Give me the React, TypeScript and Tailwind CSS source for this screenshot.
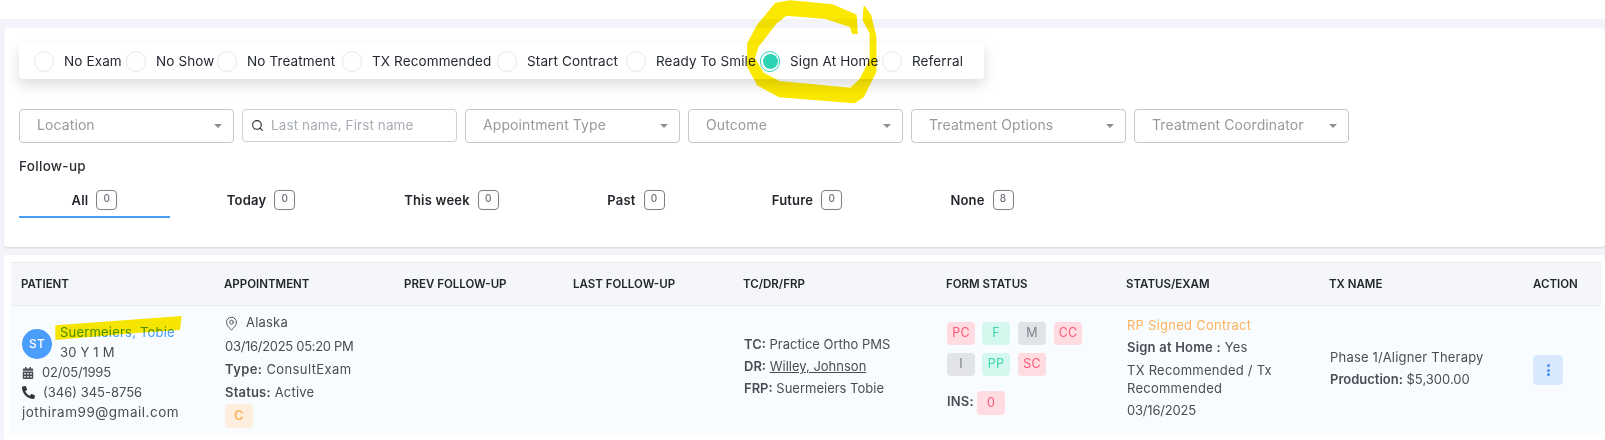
import React from 'react';
import { MapPin, Search } from 'lucide-react';
import { FaCalendarAlt, FaPhone } from 'react-icons/fa';

const outcomes = [
  { label: 'No Exam', width: 'w-[92px]' },
  { label: 'No Show', width: 'w-[91px]' },
  { label: 'No Treatment', width: 'w-[125px]' },
  { label: 'TX Recommended', width: 'w-[155px]' },
  { label: 'Start Contract', width: 'w-[129px]' },
  { label: 'Ready To Smile', width: 'w-[134px]' },
  { label: 'Sign At Home', width: 'w-[122px]', checked: true },
  { label: 'Referral', width: 'w-[102px]' },
];

const tabs = [
  { label: 'All', count: 0, width: 'w-[151px]', active: true },
  { label: 'Today', count: 0, width: 'w-[182px]' },
  { label: 'This week', count: 0, width: 'w-[199px]' },
  { label: 'Past', count: 0, width: 'w-[170px]' },
  { label: 'Future', count: 0, width: 'w-[172px]' },
  { label: 'None', count: 8, width: 'w-[178px]' },
];

const columns = ['PATIENT', 'APPOINTMENT', 'PREV FOLLOW-UP', 'LAST FOLLOW-UP', 'TC/DR/FRP', 'FORM STATUS', 'STATUS/EXAM', 'TX NAME', 'ACTION'];

const tones = {
  red: 'bg-[#ffdbe2] text-[#fc5a72]',
  green: 'bg-[#d4f7ee] text-[#3fd6b0]',
  gray: 'bg-[#e2e3e6] text-[#7d828c]',
};

function Chip({ text, tone }: { text: string; tone: keyof typeof tones }) {
  return (
    <span className={`flex h-[23px] w-[28px] items-center justify-center rounded-[4px] text-[12.5px] ${tones[tone]}`}>
      {text}
    </span>
  );
}

function Select({ label }: { label: string }) {
  return (
    <div className="flex h-[34px] w-[215px] items-center justify-between rounded-[4px] border border-[#c6c6c6] pl-[17px] pr-[11px]">
      <span className="-mt-[3px] text-[14px] tracking-[0.1px] text-[#9a9a9a]">{label}</span>
      <span className="h-0 w-0 border-x-[4px] border-t-[4px] border-x-transparent border-t-[#8f8f8f]" />
    </div>
  );
}

export default function App() {
  return (
    <div className="relative h-[440px] w-[1605px] overflow-hidden bg-white pt-[19px] font-['Inter',sans-serif] text-[13px] tracking-[0.2px] text-[#4a4d55]">
      <div className="h-[421px] bg-[#f3f4f9] pl-[4px] pt-[9px]">
        <div className="h-[219px] rounded-[4px] bg-white pl-[15px] pt-[15px] shadow-[0_1px_2px_rgba(0,0,0,0.12)]">
          <div className="flex h-[36px] w-[965px] items-center rounded-[4px] bg-white pl-[15px] shadow-[0_6px_14px_rgba(0,0,0,0.14)]">
            {outcomes.map((o) => (
              <label key={o.label} className={`flex items-center gap-[10px] ${o.width}`}>
                {o.checked ? (
                  <span className="flex h-[21px] w-[20px] items-center justify-center rounded-full border border-[#2ed3b4] bg-white">
                    <span className="h-[15px] w-[15px] rounded-full bg-[#2ed3b4]" />
                  </span>
                ) : (
                  <span className="h-[21px] w-[20px] rounded-full border border-[#e6e7ea] bg-white" />
                )}
                <span className="whitespace-nowrap text-[13.5px] tracking-[0.12px] text-[#262a33]">{o.label}</span>
              </label>
            ))}
          </div>

          <div className="mt-[30px] flex gap-[8px]">
            <Select label="Location" />
            <div className="flex h-[33px] w-[215px] items-center rounded-[4px] border border-[#d0d0d0] pl-[8px]">
              <Search size={13} strokeWidth={2} className="text-[#22252b]" />
              <span className="ml-[7px] text-[13.5px] tracking-[0.1px] text-[#a9adb5]">Last name, First name</span>
            </div>
            <Select label="Appointment Type" />
            <Select label="Outcome" />
            <Select label="Treatment Options" />
            <Select label="Treatment Coordinator" />
          </div>

          <div className="mt-[13px] text-[13.5px] font-medium tracking-[0.3px] text-[#2a2d34]">Follow-up</div>

          <div className="mt-[8px] flex">
            {tabs.map((t) => (
              <div
                key={t.label}
                className={`flex h-[34px] items-start justify-center gap-[8px] pt-[6px] ${t.width} ${t.active ? 'border-b-2 border-[#4a9dfb]' : ''}`}
              >
                <span className="mt-[1px] text-[13px] font-semibold text-[#23262d]">{t.label}</span>
                <span className="flex h-[20px] w-[21px] items-center justify-center rounded-[4px] border border-[#7b7f87] pb-[3px] text-[10px] font-medium text-[#6c7079]">
                  {t.count}
                </span>
              </div>
            ))}
          </div>
        </div>

        <div className="mt-[8px] h-[185px] rounded-[4px] bg-white pl-[7px] pr-[4px] pt-[7px]">
          <div className="grid h-[44px] grid-cols-[203px_180px_169px_170px_203px_180px_203px_204px_78px] items-center border-y border-[#e9ebef] bg-[#f5f6fa] pt-[1px]">
            {columns.map((c) => (
              <div key={c} className="pl-[10px] text-[11.5px] font-semibold tracking-normal whitespace-nowrap text-[#23262d]">{c}</div>
            ))}
          </div>

          <div className="grid h-[129px] grid-cols-[203px_180px_169px_170px_203px_180px_203px_204px_78px] bg-[#f9fcff]">
            {/* patient */}
            <div className="pl-[11px] pt-[16px]">
              <div className="flex items-start gap-[8px]">
                <span className="mt-[7px] flex h-[30px] w-[30px] items-center justify-center rounded-full bg-[#4a9dfb] text-[12px] font-medium text-white">ST</span>
                <div>
                  <div className="h-[20px] leading-[20px] text-[#4a9dfb]">Suermeiers, Tobie</div>
                  <div className="h-[20px] leading-[20px]">30 Y 1 M</div>
                </div>
              </div>
              <div className="mt-[1px] flex h-[20px] items-center gap-[8px]">
                <FaCalendarAlt size={12} className="text-[#4a4d55]" />
                <span className="tracking-[-0.2px]">02/05/1995</span>
              </div>
              <div className="flex h-[19px] items-center gap-[8px]">
                <FaPhone size={13} className="-scale-x-100 text-[#33363d]" />
                <span className="text-[13px] tracking-normal">(346) 345-8756</span>
              </div>
              <div className="h-[20px] text-[13.5px] leading-[20px] tracking-[0.5px]">jothiram99@gmail.com</div>
            </div>

            {/* appointment */}
            <div className="pl-[11px] pt-[6px]">
              <div className="flex h-[22px] items-center gap-[7px]">
                <MapPin size={15} strokeWidth={1.5} className="-ml-[1px]" />
                <span>Alaska</span>
              </div>
              <div className="h-[24px] leading-[24px] tracking-[-0.3px]">03/16/2025 05:20 PM</div>
              <div className="h-[23px] leading-[23px] tracking-[0.4px]"><b className="font-semibold">Type:</b> ConsultExam</div>
              <div className="h-[22px] leading-[22px]"><b className="font-semibold">Status:</b> Active</div>
              <span className="mt-[1px] flex h-[24px] w-[28px] items-center justify-center rounded-[4px] bg-[#fdeedd] text-[13px] font-semibold text-[#fdb35e]">C</span>
            </div>

            <div />
            <div />

            {/* tc/dr/frp */}
            <div className="pl-[11px] pt-[27px] tracking-normal">
              <div className="h-[22px] leading-[22px]"><b className="font-semibold">TC:</b> Practice Ortho PMS</div>
              <div className="h-[23px] leading-[23px]"><b className="font-semibold">DR:</b> <span className="underline">Willey, Johnson</span></div>
              <div className="h-[21px] leading-[21px]"><b className="font-semibold">FRP:</b> Suermeiers Tobie</div>
            </div>

            {/* form status */}
            <div className="pl-[11px] pt-[16px]">
              <div className="flex gap-[7px]">
                <Chip text="PC" tone="red" />
                <Chip text="F" tone="green" />
                <span className="ml-[1px]"><Chip text="M" tone="gray" /></span>
                <span className="ml-[1px]"><Chip text="CC" tone="red" /></span>
              </div>
              <div className="mt-[8px] flex gap-[7px]">
                <Chip text="I" tone="gray" />
                <Chip text="PP" tone="green" />
                <span className="ml-[1px]"><Chip text="SC" tone="red" /></span>
              </div>
              <div className="mt-[15px] flex items-center gap-[6px]">
                <b className="-mt-[2px] w-[24px] font-semibold">INS:</b>
                <span className="flex h-[24px] w-[28px] items-center justify-center rounded-[4px] bg-[#ffdbe2] text-[12.5px] text-[#fc5a72]">0</span>
              </div>
            </div>

            {/* status/exam */}
            <div className="pl-[11px] pt-[8px]">
              <div className="h-[22px] leading-[22px] tracking-[0.25px] text-[#fdb35e]">RP Signed Contract</div>
              <div className="h-[22px] leading-[22px]"><b className="font-semibold">Sign at Home :</b> Yes</div>
              <div className="w-[150px] pt-[3px] leading-[18px] tracking-[0.25px]">TX Recommended / Tx Recommended</div>
              <div className="mt-[2px] h-[23px] leading-[23px] tracking-[-0.2px]">03/16/2025</div>
            </div>

            {/* tx name */}
            <div className="pl-[11px] pt-[40px]">
              <div className="h-[22px] leading-[22px]">Phase 1/Aligner Therapy</div>
              <div className="h-[22px] leading-[22px] tracking-normal"><b className="font-semibold">Production:</b> $5,300.00</div>
            </div>

            {/* action */}
            <div className="pl-[10px] pt-[49px]">
              <div className="flex h-[30px] w-[30px] flex-col items-center justify-center gap-[1.5px] rounded-[4px] bg-[#d8e9fe]">
                <span className="h-[3px] w-[3px] rounded-full bg-[#4a8ffb]" />
                <span className="h-[3px] w-[3px] rounded-full bg-[#4a8ffb]" />
                <span className="h-[3px] w-[3px] rounded-full bg-[#4a8ffb]" />
              </div>
            </div>
          </div>
        </div>
      </div>

      {/* marker scribbles over the screenshot */}
      <svg className="absolute left-[540px] top-0 mix-blend-multiply" width="560" height="150" viewBox="0 0 1568 450" preserveAspectRatio="none">
        <path
          fill="#fbe800"
          stroke="#fbe800"
          strokeWidth="4"
          strokeLinejoin="round"
          d="M908 20 L925 45 L940 110 L940 215 L905 290 L880 308 L670 290 L610 255 L582 200 L582 130 L610 75 L660 10 L700 3 L820 15 L885 45 L888 100 L875 100 L870 80 L800 55 L690 45 L660 70 L610 140 L600 175 L625 220 L670 245 L870 265 L895 240 L925 180 L925 100 L905 60 Z"
        />
      </svg>
      <svg className="absolute left-0 top-[300px] mix-blend-multiply" width="400" height="140" viewBox="0 0 1200 420">
        <path fill="#fbe800" d="M166 76 L545 48 L540 90 L400 100 L166 120 Z" />
      </svg>
    </div>
  );
}
